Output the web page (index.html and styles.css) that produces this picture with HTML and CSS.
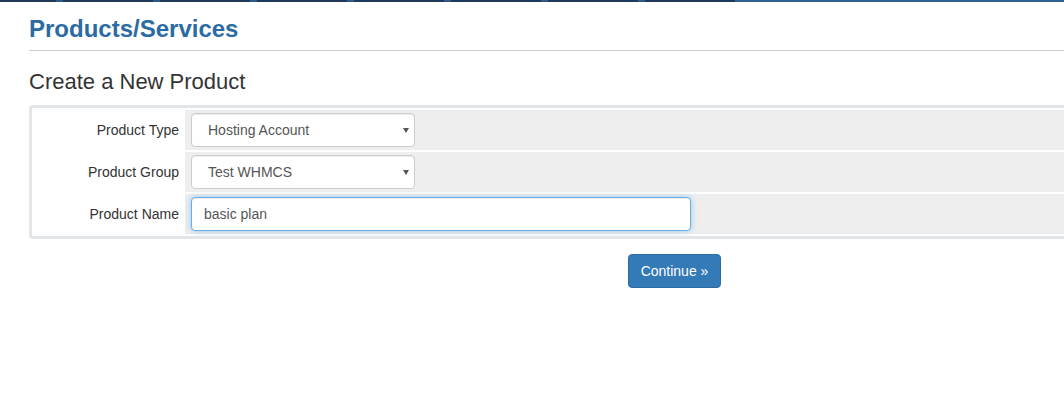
FILE: index.html
```html
<!DOCTYPE html>
<html>
<head>
<meta charset="utf-8">
<title>Products/Services</title>
<link rel="stylesheet" href="styles.css">
</head>
<body>
<div class="topstrip"><div class="strip-dark"></div><div class="strip-light"></div></div>
<div class="page">
  <div class="content">
    <h1 class="page-title">Products/Services</h1>
    <hr class="divider">
    <h2 class="section-title">Create a New Product</h2>
    <div class="form-wrap">
      <table class="form">
        <tr>
          <td class="fieldlabel">Product Type</td>
          <td class="fieldarea">
            <span class="select-wrap"><select class="form-control select-type"><option>Hosting Account</option></select></span>
          </td>
        </tr>
        <tr>
          <td class="fieldlabel">Product Group</td>
          <td class="fieldarea">
            <span class="select-wrap"><select class="form-control select-type"><option>Test WHMCS</option></select></span>
          </td>
        </tr>
        <tr>
          <td class="fieldlabel">Product Name</td>
          <td class="fieldarea">
            <input id="productname" class="form-control input-name is-focused" type="text" value="basic plan">
          </td>
        </tr>
      </table>
    </div>
    <div class="btn-container">
      <button class="btn btn-primary" type="button">Continue &raquo;</button>
    </div>
  </div>
</div>
<script src="script.js"></script>
</body>
</html>
```
FILE: styles.css
```css
html, body {
  margin: 0;
  padding: 0;
  overflow: hidden;
  background: #fff;
  font-family: "Liberation Sans", Arial, sans-serif;
  font-size: 14px;
  color: #333;
}

.topstrip {
  display: flex;
  height: 2px;
}
.strip-dark {
  width: 735px;
  background: repeating-linear-gradient(90deg, #1e3a58 0 56px, #2f5a88 56px 63px, #1e3a58 63px 97px);
}
.strip-light {
  flex: 1;
  background: #2f6194;
}

.page {
  padding-left: 29px;
}

.page-title {
  margin: 14px 0 0 0;
  font-size: 24px;
  line-height: 26px;
  font-weight: bold;
  color: #2b6ba4;
}

.divider {
  margin: 8px 0 0 0;
  border: 0;
  border-top: 1px solid #cccccc;
  height: 0;
}

.section-title {
  margin: 19px 0 0 0;
  font-size: 22px;
  line-height: 24px;
  font-weight: normal;
  color: #333;
}

.form-wrap {
  margin-top: 11px;
  border: 3px solid #e2e6e9;
  border-right-width: 0;
  border-radius: 4px 0 0 4px;
  overflow: hidden;
}

.form {
  width: calc(100% + 2px);
  border-collapse: separate;
  border-spacing: 2px 2px;
}
.fieldlabel {
  width: 145px;
  padding: 0 4px 0 0;
  text-align: right;
  white-space: nowrap;
  background: #fff;
  color: #333;
  font-size: 14px;
  height: 40px;
}
.fieldarea {
  background: #eeeeee;
  padding: 3px 6px;
  height: 34px;
}

.form-control {
  box-sizing: border-box;
  height: 34px;
  font-family: "Liberation Sans", Arial, sans-serif;
  font-size: 14px;
  color: #555;
  background: #fff;
  border: 1px solid #ccc;
  border-radius: 4px;
  box-shadow: inset 0 1px 1px rgba(0,0,0,0.075);
  display: block;
  margin: 0;
}

.select-wrap {
  position: relative;
  display: block;
  width: 224px;
}
.select-wrap::after {
  content: "";
  position: absolute;
  right: 6px;
  top: 15px;
  border-left: 3px solid transparent;
  border-right: 3px solid transparent;
  border-top: 5px solid #555;
  pointer-events: none;
}
.select-type {
  width: 224px;
  padding: 6px 20px 6px 16px;
  -webkit-appearance: none;
  appearance: none;
}

.input-name {
  width: 500px;
  padding: 6px 12px;
  caret-color: #333;
}
.is-focused {
  border-color: #66afe9;
  outline: 0;
  box-shadow: inset 0 1px 1px rgba(0,0,0,0.075), 0 0 6px rgba(102,175,233,0.6);
}

.btn-container {
  margin-top: 15px;
  padding-left: 256px;
  text-align: center;
}
.btn {
  display: inline-block;
  box-sizing: border-box;
  height: 34px;
  padding: 6px 12px;
  font-family: "Liberation Sans", Arial, sans-serif;
  font-size: 14px;
  line-height: 20px;
  border-radius: 4px;
  cursor: pointer;
}
.btn-primary {
  color: #fff;
  background: #337ab7;
  border: 1px solid #2e6da4;
}
```
FILE: script.js
```js
var field = document.getElementById('productname');
field.focus();
field.setSelectionRange(field.value.length, field.value.length);
```
